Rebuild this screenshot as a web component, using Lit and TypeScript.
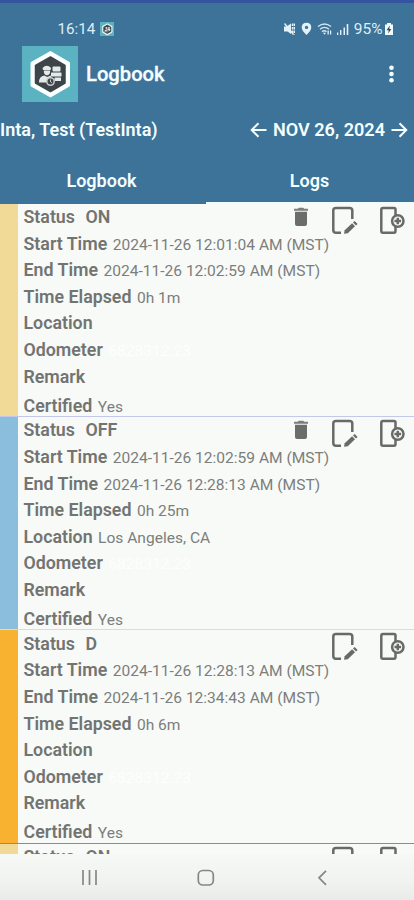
import { LitElement, html, css, svg, nothing } from "lit";
import { customElement, property } from "lit/decorators.js";

interface LogEntry {
  status: string;
  tone: string;
  start: string;
  end: string;
  elapsed: string;
  location: string;
  odometer: string;
  removable: boolean;
  collapsed?: boolean;
}

const ENTRIES: LogEntry[] = [
  { status: "ON", tone: "on", start: "2024-11-26 12:01:04 AM (MST)", end: "2024-11-26 12:02:59 AM (MST)", elapsed: "0h 1m", location: "", odometer: "6828312.23", removable: true },
  { status: "OFF", tone: "off", start: "2024-11-26 12:02:59 AM (MST)", end: "2024-11-26 12:28:13 AM (MST)", elapsed: "0h 25m", location: "Los Angeles, CA", odometer: "6828312.23", removable: true },
  { status: "D", tone: "drive", start: "2024-11-26 12:28:13 AM (MST)", end: "2024-11-26 12:34:43 AM (MST)", elapsed: "0h 6m", location: "", odometer: "6828312.23", removable: false },
  { status: "ON", tone: "on", start: "", end: "", elapsed: "", location: "", odometer: "", removable: false, collapsed: true },
];

const emblem = svg`
  <rect width="56" height="56" fill="#5bb2c1"/>
  <path d="M28.500 5.500 47.500 16.500V40L28.500 51 9 40V16.500Z" fill="#fbffff" stroke="#fbffff" stroke-width="1" stroke-linejoin="round"/>
  <path d="M28.500 11 43 19.500V37L28.500 45.500 13.500 37V19.500Z" fill="#3d4548" stroke="#3d4548" stroke-width="1.500" stroke-linejoin="round"/>
  <g fill="#e4eaea">
    <path d="M20.500 22q4.300-4.500 8.600 0l-.6 2H21.100Z"/>
    <path d="M21.800 24.500h6.400q0 4.800-3.200 4.800t-3.200-4.800Z"/>
    <path d="M17 36.500q0-6.500 5.500-7l2.500 1.500 4-1.500v7Z"/>
    <rect x="30.500" y="20.500" width="8" height="5" rx="1"/>
    <rect x="29" y="26.500" width="10.500" height="4" rx=".5"/>
    <rect x="32.500" y="31.500" width="6.500" height="3.500" rx=".5"/>
  </g>
  <circle cx="28.500" cy="35.500" r="3.700" fill="#3d4548" stroke="#c6cece" stroke-width="1.500"/>
  <path d="M28.500 33.500v2.200l1.500 1" fill="none" stroke="#c6cece"/>`;

const sheetIcon = html`
  <svg class="sheet" viewBox="0 0 27 30" width="27" height="30">
    <path d="M10 26.800H5Q2.300 26.800 2.300 24V4.500Q2.300 2 5 2H18.500Q21.300 2 21.300 4.500V13" fill="none" stroke="#686a68" stroke-width="2.500"/>
    <path d="M13 27.800 13.700 24.300 21.100 17.200 24 20.200 16.800 27.200Z" fill="#686a68"/>
    <path d="M22 16.400 23.600 14.900 26.600 17.900 25 19.400Z" fill="#686a68"/>
  </svg>`;

const insertIcon = html`
  <svg class="insert" viewBox="0 0 27 30" width="27" height="30">
    <path d="M16.500 9V3.500Q16.500 2 15 2H4Q2.300 2 2.300 3.700V25Q2.300 26.800 4 26.800H15Q16.500 26.800 16.500 25V21" fill="none" stroke="#686a68" stroke-width="2.500"/>
    <circle cx="18.800" cy="15" r="5.700" fill="none" stroke="#686a68" stroke-width="2.500"/>
    <path d="M18.800 11.700v6.600M15.500 15h6.600" stroke="#686a68" stroke-width="2.500"/>
  </svg>`;

const trashIcon = html`
  <svg class="trash" viewBox="0 0 16 20" width="16" height="20">
    <path d="M1 1.800H4.700L5.800.8H10.200L11.300 1.800H15V3.700H1Z" fill="#7b7d7b"/>
    <path d="M2 4.800H14V17Q14 19 12 19H4Q2 19 2 17Z" fill="#6b6d6b"/>
  </svg>`;

@customElement("log-card")
export class LogCard extends LitElement {
  @property({ attribute: false }) entry!: LogEntry;

  static styles = css`
    :host { display: block; flex: none; height: 213.400px; }
    .card { display: flex; height: 100%; box-sizing: border-box; border-bottom: 1px solid #d9dbe0; }
    .card.on { border-color: #c3c7ea; }
    .card.drive { border-color: #8b8c8b; }
    .stripe { width: 18px; flex: none; }
    .on .stripe { background: #f1d997; }
    .off .stripe { background: #8bbedd; }
    .drive .stripe { background: #f8b22f; }
    .body { flex: 1; min-width: 0; padding: 0.400px 0 0 5.500px; position: relative; }
    .row { height: 26.620px; line-height: 26.620px; white-space: pre; display: flex; align-items: baseline; }
    .row.last { padding-top: 2.500px; }
    .label { font-size: 17.800px; font-weight: 600; color: #727472; }
    .state { margin-left: 10.500px; }
    .value { font-size: 15.550px; color: #7c7e7c; margin-left: 5.500px; }
    .faint { color: #fdfffd; }
    .tools { position: absolute; right: 8.500px; top: 0; display: flex; }
    .trash { margin: 3px 22.500px 0 0; }
    .sheet { margin: 2px 20.500px 0 0; }
    .insert { margin-top: 2px; }
  `;

  private field(label: string, value: string, extra = "") {
    return html`<div class="row ${label === "Certified" ? "last" : ""}"><span class="label">${label}</span>${value ? html`<span class="value ${extra}">${value}</span>` : nothing}</div>`;
  }

  private details(e: LogEntry) {
    return html`
      ${this.field("Start Time", e.start)}
      ${this.field("End Time", e.end)}
      ${this.field("Time Elapsed", e.elapsed)}
      ${this.field("Location", e.location)}
      ${this.field("Odometer", e.odometer, "faint")}
      ${this.field("Remark", "")}
      ${this.field("Certified", "Yes")}`;
  }

  render() {
    const e = this.entry;
    return html`<div class="card ${e.tone}">
      <div class="stripe"></div>
      <div class="body">
        <div class="row"><span class="label">Status</span><span class="label state">${e.status}</span></div>
        ${e.collapsed ? nothing : this.details(e)}
        <div class="tools">${e.removable ? trashIcon : nothing}${sheetIcon}${insertIcon}</div>
      </div>
    </div>`;
  }
}

@customElement("app-root")
export class AppRoot extends LitElement {
  static styles = css`
    :host { display: flex; flex-direction: column; height: 900px; overflow: hidden; font-family: Roboto, "Liberation Sans", sans-serif; background: #f8faf7; }
    header { flex: none; height: 203.500px; background: #3d7299; color: #f4ffff; border-top: 3px solid #3454a0; box-sizing: border-box; display: flex; flex-direction: column; }
    .statusbar { height: 42.500px; box-sizing: border-box; padding: 9px 20px 0 57.500px; display: flex; align-items: center; justify-content: space-between; font-size: 15.500px; color: #dfeef6; }
    .side { display: flex; align-items: center; }
    .clock { font-size: 15.200px; }
    .mini { margin-left: 4.500px; }
    .level { margin: 0 1.500px 0 5px; }
    .brand { height: 56px; padding: 0 15px 0 22px; display: flex; align-items: center; }
    .title { flex: 1; margin-left: 8px; font-size: 20.200px; font-weight: 500; -webkit-text-stroke: 0.300px #f4ffff; }
    .driver { height: 56px; display: flex; align-items: center; justify-content: space-between; font-size: 18px; font-weight: 600; padding-right: 6px; white-space: pre; }
    .date { display: flex; align-items: center; gap: 6px; font-size: 18.100px; }
    .tabs { flex: 1; display: flex; font-size: 18px; font-weight: 600; }
    .tab { width: 206px; flex: none; display: flex; align-items: center; justify-content: center; box-sizing: border-box; padding: 2px 3px 0 0; border-bottom: 2.500px solid transparent; }
    .tab.active { flex: 1; width: auto; border-color: #effcff; padding: 2px 1px 0 0; }
    main { flex: 1; min-height: 0; overflow: hidden; display: flex; flex-direction: column; }
    nav { flex: none; height: 46px; background: linear-gradient(#f6f8f6, #f1f3f1 60%, #e9ebe9); display: flex; align-items: center; justify-content: center; }
    .keys { display: block; }
  `;

  render() {
    return html`
      <header>
        <div class="statusbar">
          <div class="side"><span class="clock">16:14</span><svg class="mini" width="14.500" height="14.500" viewBox="0 0 56 56">${emblem}</svg></div>
          <div class="side">
            <svg width="65" height="16" viewBox="0 0 65 16" fill="#e3f1f8">
              <path d="M0 5.500H2.500L7 2.500V13L3.500 10.500H0Z"/>
              <path d="M.5 2.500 9.500 13.500" stroke="#e3f1f8" stroke-width="1.500"/>
              <path d="M8.500 2.500v10.500M10.300 2.500v11" stroke="#e3f1f8" stroke-width="1.400" stroke-dasharray="2.500 1"/>
              <path fill-rule="evenodd" d="M22.500 1.800Q27.300 1.800 27.300 6.500 27.300 9.500 22.500 14 17.700 9.500 17.700 6.500 17.700 1.800 22.500 1.800ZM22.500 4.700a1.700 1.700 0 1 0 0 3.400 1.700 1.700 0 0 0 0-3.400Z"/>
              <g fill="none" stroke="#d3e5ee" stroke-width="1.400"><path d="M34 5.500Q40.500.5 47 5.500M36 8.200Q40.500 4.500 45 8.200M38 10.800Q40.500 8.700 42.500 10.800"/></g>
              <path d="M40.500 13.800 39 11.800H42ZM43.500 9.500h1.300v4h-1.300ZM46 9.500h1.200v4H46Z"/>
              <path d="M53 11.500h1.300V14H53ZM56 9h1.400v5H56ZM59.500 6.500H61V14h-1.500ZM62.700 3h1.600v11h-1.600Z"/>
            </svg>
            <span class="level">95%</span>
            <svg width="10" height="14" viewBox="0 0 10 14"><path d="M3 1H7V2.500H9V13H1V2.500H3Z" fill="#f1fbff"/><path d="M5.800 3.500 2.600 8.200H4.700L4.200 11.500 7.400 6.900H5.300Z" fill="#294b63"/></svg>
          </div>
        </div>
        <div class="brand">
          <svg width="56" height="56" viewBox="0 0 56 56">${emblem}</svg>
          <span class="title">Logbook</span>
          <svg width="15" height="20" viewBox="0 0 15 20" fill="#f4ffff"><circle cx="7.500" cy="3.700" r="2.300"/><circle cx="7.500" cy="10" r="2.300"/><circle cx="7.500" cy="16.300" r="2.300"/></svg>
        </div>
        <div class="driver">
          <span>Inta, Test (TestInta)</span>
          <div class="date">
            <svg width="17" height="16" viewBox="0 0 17 16" fill="none" stroke="#f4ffff" stroke-width="2"><path d="M16.500 8H2M8.500 1.200 1.700 8 8.500 14.800"/></svg>
            <span>NOV 26, 2024</span>
            <svg width="17" height="16" viewBox="0 0 17 16" fill="none" stroke="#f4ffff" stroke-width="2"><path d="M.5 8H15M8.500 1.200 15.300 8 8.500 14.800"/></svg>
          </div>
        </div>
        <div class="tabs"><div class="tab">Logbook</div><div class="tab active">Logs</div></div>
      </header>
      <main>${ENTRIES.map((e) => html`<log-card .entry=${e}></log-card>`)}</main>
      <nav>
        <svg class="keys" width="414" height="46" viewBox="0 0 414 46" fill="none" stroke="#858785" stroke-width="1.700">
          <path d="M83 16v15M89.500 16v15M96 16v15"/>
          <rect x="198.300" y="16.500" width="15" height="14.500" rx="4.500"/>
          <path d="M326 16.800 319 23.800 326 30.800"/>
        </svg>
      </nav>`;
  }
}
